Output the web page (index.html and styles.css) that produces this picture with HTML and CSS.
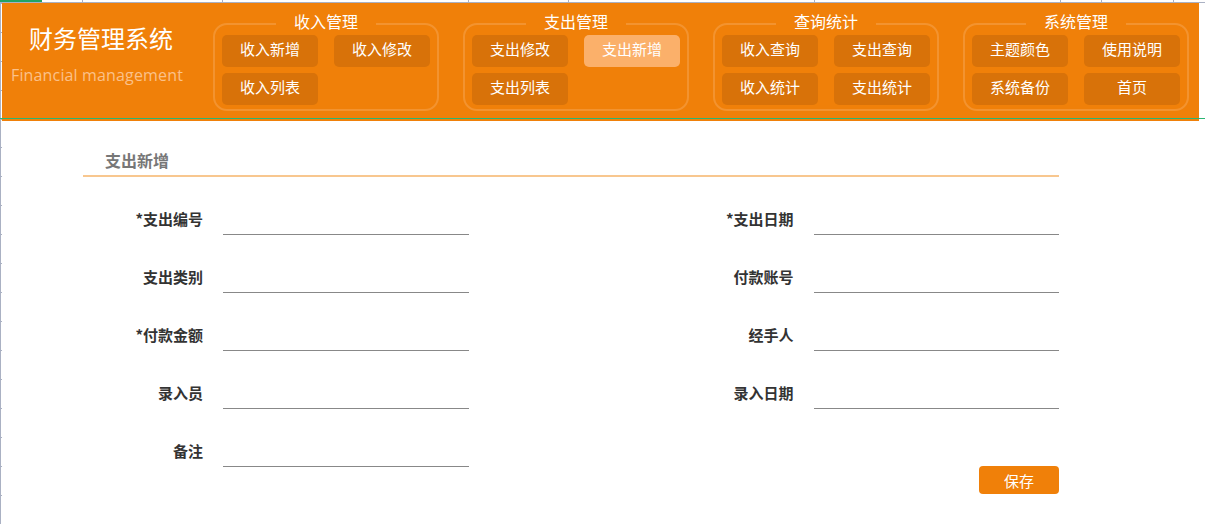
FILE: index.html
```html
<!DOCTYPE html>
<html lang="zh-CN">
<head>
    <meta charset="UTF-8">
    <meta name="viewport" content="width=device-width, initial-scale=1.0">
    <title>财务管理系统 - 支出新增</title>
    <link rel="stylesheet" href="styles.css">
</head>
<body>
    <!-- sheet column header strip -->
    <div class="col-head">
        <div class="col-cell c1"><span class="col-sel"></span></div>
        <div class="col-cell c2"></div>
        <div class="col-cell c3"></div>
        <div class="col-cell c4"></div>
        <div class="col-cell c5"></div>
        <div class="col-cell c6"></div>
        <div class="col-cell c7"></div>
        <div class="col-cell c8"></div>
        <div class="col-cell c9"></div>
    </div>

    <div class="sheet">
        <div class="row-head"></div>

        <div class="page">
            <header class="topbar">
                <div class="brand">
                    <div class="brand-title">财务管理系统</div>
                    <div class="brand-sub">Financial management</div>
                </div>

                <nav class="menu">
                    <fieldset class="menu-group">
                        <legend>收入管理</legend>
                        <a class="menu-btn">收入新增</a>
                        <a class="menu-btn">收入修改</a>
                        <a class="menu-btn">收入列表</a>
                    </fieldset>
                    <fieldset class="menu-group">
                        <legend>支出管理</legend>
                        <a class="menu-btn">支出修改</a>
                        <a class="menu-btn active">支出新增</a>
                        <a class="menu-btn">支出列表</a>
                    </fieldset>
                    <fieldset class="menu-group">
                        <legend>查询统计</legend>
                        <a class="menu-btn">收入查询</a>
                        <a class="menu-btn">支出查询</a>
                        <a class="menu-btn">收入统计</a>
                        <a class="menu-btn">支出统计</a>
                    </fieldset>
                    <fieldset class="menu-group">
                        <legend>系统管理</legend>
                        <a class="menu-btn">主题颜色</a>
                        <a class="menu-btn">使用说明</a>
                        <a class="menu-btn">系统备份</a>
                        <a class="menu-btn">首页</a>
                    </fieldset>
                </nav>
            </header>

            <main class="panel">
                <h2 class="panel-title">支出新增</h2>

                <form class="form">
                    <label class="field"><span class="field-label">*支出编号</span><input class="field-input" type="text"></label>
                    <label class="field"><span class="field-label">*支出日期</span><input class="field-input" type="text"></label>
                    <label class="field"><span class="field-label">支出类别</span><input class="field-input" type="text"></label>
                    <label class="field"><span class="field-label">付款账号</span><input class="field-input" type="text"></label>
                    <label class="field"><span class="field-label">*付款金额</span><input class="field-input" type="text"></label>
                    <label class="field"><span class="field-label">经手人</span><input class="field-input" type="text"></label>
                    <label class="field"><span class="field-label">录入员</span><input class="field-input" type="text"></label>
                    <label class="field"><span class="field-label">录入日期</span><input class="field-input" type="text"></label>
                    <label class="field"><span class="field-label">备注</span><input class="field-input" type="text"></label>
                </form>

                <div class="actions">
                    <button class="save-btn" type="button">保存</button>
                </div>
            </main>
        </div>
    </div>
</body>
</html>
```

FILE: styles.css
```css
body {
    margin: 0;
    background: #fff;
    font-family: "Noto Sans CJK SC", "Noto Sans", sans-serif;
    overflow: hidden;
}

/* Column header strip of the sheet */
.col-head {
    display: flex;
    height: 2px;
    border-bottom: 1px solid #aab1c3;
}

.col-cell {
    position: relative;
    border-right: 1px solid #aab1c3;
    box-sizing: border-box;
}

.c1 { width: 83px; }
.c2 { width: 140px; }
.c3 { width: 246px; }
.c4 { width: 100px; }
.c5 { width: 246px; }
.c6 { width: 246px; }
.c7 { width: 41px; }
.c8 { width: 72px; }
.c9 { flex: 1; border-right: none; }

.col-sel {
    position: absolute;
    left: 0;
    top: 0;
    width: 42px;
    height: 2px;
    background: #21a366;
}

.sheet {
    display: flex;
    position: relative;
    height: 521px;
}

/* Selection line across the sheet */
.sheet::after {
    content: "";
    position: absolute;
    left: 0;
    right: 0;
    top: 115px;
    height: 1px;
    background: #2bb673;
}

.row-head {
    width: 2px;
    background:
        repeating-linear-gradient(to bottom, transparent 0, transparent 26px, #aab1c3 26px, #aab1c3 27px, transparent 27px, transparent 29px),
        linear-gradient(to right, #aab1c3 0, #aab1c3 1px, transparent 1px);
    background-position: 0 118px, 0 0;
    background-repeat: repeat-y, no-repeat;
}

.page {
    flex: 1;
}

/* Top orange bar */
.topbar {
    display: flex;
    height: 118px;
    margin-right: 6px;
    background: #f08009;
    box-sizing: border-box;
    padding-top: 9px;
}

.brand {
    width: 198px;
    text-align: center;
    padding-top: 10px;
}

.brand-title {
    font-size: 24px;
    line-height: 32px;
    color: #fff;
}

.brand-sub {
    margin-top: 10px;
    padding-right: 8px;
    font-family: "Open Sans", "Noto Sans", sans-serif;
    font-size: 16px;
    line-height: 22px;
    letter-spacing: 0.15px;
    color: #fbc189;
}

.menu {
    display: flex;
    gap: 24px;
    margin-left: 13px;
}

.menu-group {
    display: grid;
    grid-template-columns: 96px 96px;
    grid-auto-rows: 32px;
    gap: 6px 16px;
    align-content: start;
    width: 226px;
    height: 99px;
    box-sizing: border-box;
    margin: 0;
    padding: 0 7px 4px;
    border: 2px solid #f3932f;
    border-radius: 14px;
}

.menu-group legend {
    margin: 0 auto;
    padding: 0 18px 5px;
    font-size: 16px;
    line-height: 18px;
    color: #fff;
}

.menu-btn {
    display: flex;
    align-items: center;
    justify-content: center;
    padding-bottom: 6px;
    background: #d87209;
    border-radius: 5px;
    color: #fff;
    font-size: 15px;
    cursor: pointer;
}

.menu-btn.active {
    background: #fbb06a;
}

/* Form panel */
.panel {
    width: 976px;
    margin-left: 81px;
    padding-top: 28px;
}

.panel-title {
    margin: 0;
    padding: 0 0 4px 22px;
    font-size: 16px;
    line-height: 22px;
    font-weight: bold;
    color: #777;
    border-bottom: 2px solid #f8c78f;
}

.form {
    display: grid;
    grid-template-columns: 1fr 1fr;
    column-gap: 205px;
    row-gap: 28px;
    margin-top: 28px;
}

.field {
    display: flex;
    align-items: flex-start;
    height: 30px;
}

.field-label {
    width: 120px;
    text-align: right;
    font-size: 15px;
    line-height: 28px;
    font-weight: bold;
    color: #333;
}

.field-input {
    flex: 1;
    margin-left: 20px;
    height: 30px;
    box-sizing: border-box;
    border: none;
    border-bottom: 1px solid #888;
    background: transparent;
    outline: none;
    font: inherit;
}

.actions {
    display: flex;
    justify-content: flex-end;
    margin-top: -1px;
}

.save-btn {
    width: 80px;
    height: 28px;
    border: none;
    border-radius: 4px;
    background: #f08009;
    color: #fff;
    font-family: inherit;
    font-size: 15px;
    cursor: pointer;
}
```
